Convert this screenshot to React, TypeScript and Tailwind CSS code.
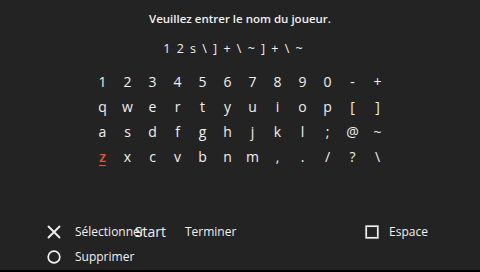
import React from "react";

const rows = [
  ["1", "2", "3", "4", "5", "6", "7", "8", "9", "0", "-", "+"],
  ["q", "w", "e", "r", "t", "y", "u", "i", "o", "p", "[", "]"],
  ["a", "s", "d", "f", "g", "h", "j", "k", "l", ";", "@", "~"],
  ["z", "x", "c", "v", "b", "n", "m", ",", ".", "/", "?", "\\"],
];

function CrossIcon() {
  return (
    <svg width="14" height="14" viewBox="0 0 14 14">
      <path d="M1.5 1.5 L12.5 12.5 M12.5 1.5 L1.5 12.5" stroke="#f2f2f2" strokeWidth="1.8" strokeLinecap="round" />
    </svg>
  );
}
function CircleIcon() {
  return (
    <svg width="14" height="14" viewBox="0 0 14 14">
      <circle cx="7" cy="7" r="5.8" fill="none" stroke="#f2f2f2" strokeWidth="1.7" />
    </svg>
  );
}
function SquareIcon() {
  return (
    <svg width="14" height="14" viewBox="0 0 14 14">
      <rect x="1.2" y="1.2" width="11.6" height="11.6" fill="none" stroke="#f2f2f2" strokeWidth="1.7" />
    </svg>
  );
}

export default function App() {
  return (
    <div
      className="w-[480px] h-[272px] bg-black flex flex-col text-[#f0f0f0] overflow-hidden"
      style={{ fontFamily: '"Open Sans", "Noto Sans", sans-serif' }}
    >
      <div className="h-[270px] bg-[#232323] flex flex-col">
        <div className="pt-[10px] h-[28px] text-center text-[11.5px] leading-[17px] font-semibold">
          Veuillez entrer le nom du joueur.
        </div>
        <div className="mt-[12px] h-[18px] text-center text-[12.5px] leading-[18px] tracking-[1px] [word-spacing:1px] pr-[13px]">
          {"1 2 s \\ ] + \\ ~ ] + \\ ~"}
        </div>
        <div className="mt-[11px] mx-auto grid grid-cols-12 w-[300px]">
          {rows.flat().map((k, i) => (
            <div key={i} className="h-[25px] flex items-center justify-center text-[14px] leading-none">
              {k === "z" ? (
                <span className="text-[#e8582a] underline underline-offset-[3px] decoration-[1px] font-semibold">z</span>
              ) : (
                <span>{k}</span>
              )}
            </div>
          ))}
        </div>
        <div className="flex-1" />
        <div className="flex flex-col gap-[11px] pb-[6px] text-[12px] leading-[14px]">
          <div className="flex items-center pl-[47px] pr-[52px]">
            <CrossIcon />
            <span className="ml-[14px]">Sélectionner</span>
            <span className="ml-[-10px] text-[14px]">Start</span>
            <span className="ml-[19px]">Terminer</span>
            <div className="flex-1" />
            <SquareIcon />
            <span className="ml-[10px]">Espace</span>
          </div>
          <div className="flex items-center pl-[47px]">
            <CircleIcon />
            <span className="ml-[14px]">Supprimer</span>
          </div>
        </div>
      </div>
    </div>
  );
}
